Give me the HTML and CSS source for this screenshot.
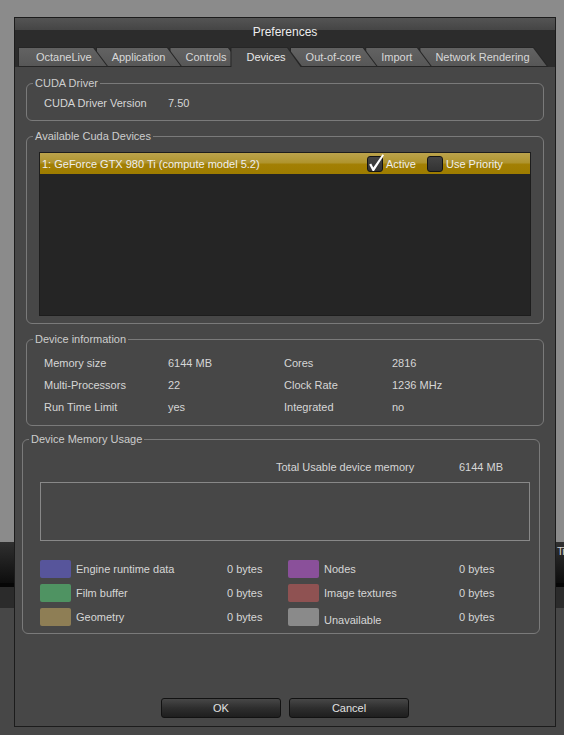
FILE: index.html
```html
<!DOCTYPE html>
<html lang="en">
<head>
  <meta charset="UTF-8">
  <meta name="viewport" content="width=device-width, initial-scale=1.0">
  <title>Preferences</title>
  <link rel="stylesheet" href="styles.css">
</head>
<body>

<!-- Application window behind the dialog -->
<div class="backdrop">
  <div class="bd-top"></div>
  <div class="bd-bar">Ti</div>
  <div class="bd-line"></div>
  <div class="bd-strip"></div>
  <div class="bd-rest"></div>
</div>

<!-- Preferences dialog -->
<div class="dialog">
  <div class="titlebar">Preferences</div>

  <!-- Tabs -->
  <div class="tabs">
    <span class="tab">OctaneLive</span>
    <span class="tab">Application</span>
    <span class="tab">Controls</span>
    <span class="tab active">Devices</span>
    <span class="tab">Out-of-core</span>
    <span class="tab">Import</span>
    <span class="tab">Network Rendering</span>
  </div>

  <div class="page">
    <!-- CUDA driver -->
    <fieldset class="group">
      <legend>CUDA Driver</legend>
      <div class="driver-row">
        <span class="driver-label">CUDA Driver Version</span>
        <span>7.50</span>
      </div>
    </fieldset>

    <!-- Device list -->
    <fieldset class="group">
      <legend>Available Cuda Devices</legend>
      <div class="devices-body">
        <div class="device-list">
          <div class="device-row">
            <span class="dev-name">1: GeForce GTX 980 Ti (compute model 5.2)</span>
            <span class="check-item">
              <span class="checkbox">
                <svg width="16" height="16" viewBox="0 0 16 16">
                  <path d="M2.2 8.6 L4.2 7.6 L6.3 11.4 L15.6 -1.8 L17 -0.8 L7 14.9 L5.6 14.9 Z" fill="#fff"/>
                </svg>
              </span>
              Active
            </span>
            <span class="check-item">
              <span class="checkbox"></span>
              Use Priority
            </span>
          </div>
        </div>
      </div>
    </fieldset>

    <!-- Device information -->
    <fieldset class="group">
      <legend>Device information</legend>
      <div class="info-grid">
        <span>Memory size</span><span>6144 MB</span>
        <span>Cores</span><span>2816</span>
        <span>Multi-Processors</span><span>22</span>
        <span>Clock Rate</span><span>1236 MHz</span>
        <span>Run Time Limit</span><span>yes</span>
        <span>Integrated</span><span>no</span>
      </div>
    </fieldset>

    <!-- Memory usage -->
    <fieldset class="group memory">
      <legend>Device Memory Usage</legend>
      <div class="memory-body">
        <div class="total-row">
          <span class="total-label">Total Usable device memory</span>
          <span>6144 MB</span>
        </div>
        <div class="usage-bar"></div>
        <div class="usage-legend">
          <span class="swatch engine"></span><span class="key">Engine runtime data</span><span>0 bytes</span>
          <span class="swatch nodes"></span><span class="key">Nodes</span><span>0 bytes</span>
          <span class="swatch film"></span><span class="key">Film buffer</span><span>0 bytes</span>
          <span class="swatch textures"></span><span class="key">Image textures</span><span>0 bytes</span>
          <span class="swatch geometry"></span><span class="key">Geometry</span><span>0 bytes</span>
          <span class="swatch unavailable"></span><span class="key low">Unavailable</span><span>0 bytes</span>
        </div>
      </div>
    </fieldset>

    <!-- Buttons -->
    <div class="buttons">
      <button type="button">OK</button>
      <button type="button">Cancel</button>
    </div>
  </div>
</div>

</body>
</html>
```

FILE: styles.css
```css
body {
  margin: 0;
  padding: 0;
  background-color: #8b8b8b;
  font-family: "Liberation Sans", Arial, sans-serif;
  font-size: 11px;
  overflow: hidden;
}

/* Window behind the dialog */
.backdrop {
  height: 735px;
  display: flex;
  flex-direction: column;
}

.bd-top {
  height: 542px;
  background-color: #8b8b8b;
}

.bd-bar {
  height: 41px;
  background: linear-gradient(#303030, #0d0d0d);
  color: #d0d0d0;
  line-height: 14px;
  padding-left: 557px;
  padding-top: 2px;
  box-sizing: border-box;
  letter-spacing: -1px;
  white-space: nowrap;
  overflow: hidden;
}

.bd-line {
  height: 4px;
  background-color: #060606;
}

.bd-strip {
  height: 21px;
  background-color: #2b2b2b;
}

.bd-rest {
  flex: 1;
  background-color: #474747;
}

/* Dialog */
.dialog {
  position: absolute;
  left: 14px;
  top: 17px;
  width: 542px;
  height: 710px;
  box-sizing: border-box;
  border: 1px solid #1c1c1c;
  background-color: #474747;
  display: flex;
  flex-direction: column;
  color: #d6d6d6;
}

.titlebar {
  height: 29px;
  line-height: 29px;
  text-align: center;
  font-size: 12px;
  color: #ececec;
  background: linear-gradient(#545454, #454545 12px, #2c2c2c 12px);
}

/* Tabs */
.tabs {
  display: flex;
  height: 20px;
  padding-left: 3px;
  background-color: #2c2c2c;
}

.tab {
  position: relative;
  height: 20px;
  line-height: 21px;
  padding: 0 17px 0 16px;
  margin-right: -13px;
  color: #d8d8d8;
  white-space: nowrap;
  background-color: #262626;
  clip-path: polygon(0 0, calc(100% - 15px) 0, 100% 100%, 0 100%);
}

.tab::before {
  content: "";
  position: absolute;
  top: 1px;
  left: 1px;
  right: 1px;
  bottom: 1px;
  background: linear-gradient(#626262, #575757);
  clip-path: polygon(0 0, calc(100% - 14.5px) 0, calc(100% - 1px) 100%, 0 100%);
  z-index: -1;
}

.tab:first-child { padding-left: 18px; }

.tab:nth-child(1) { z-index: 7; }
.tab:nth-child(2) { z-index: 6; }
.tab:nth-child(3) { z-index: 5; }
.tab:nth-child(4) { z-index: 4; }
.tab:nth-child(5) { z-index: 3; }
.tab:nth-child(6) { z-index: 2; padding-right: 20px; }
.tab:nth-child(7) { z-index: 1; padding-right: 19px; }

.tab.active {
  z-index: 10;
  color: #e8e8e8;
}

.tab.active::before {
  bottom: 0;
  background: #474747;
}

/* Page content */
.page {
  flex: 1;
  display: flex;
  flex-direction: column;
  padding: 9px 11px 0 11px;
}

.group {
  margin: 0;
  padding: 0;
  min-width: 0;
  border: 1px solid #7a7a7a;
  border-radius: 6px;
}

.group + .group {
  margin-top: 8px;
}

.group legend {
  margin-left: 6px;
  padding: 0 2px;
  line-height: 14px;
  color: #cdcdcd;
}

.driver-row {
  display: flex;
  line-height: 14px;
  padding: 6px 0 10px 17px;
}

.driver-label {
  width: 124px;
}

/* Device list */
.devices-body {
  padding: 9px 12px 7px 12px;
}

.device-list {
  height: 164px;
  box-sizing: border-box;
  border: 1px solid #1d1d1d;
  background-color: #252525;
}

.device-row {
  display: flex;
  align-items: center;
  height: 21px;
  padding-left: 2px;
  color: #efefef;
  background: linear-gradient(#bba34c, #b0952f 45%, #a27f03 55%, #9e7c00);
}

.dev-name {
  width: 325px;
}

.check-item {
  display: flex;
  align-items: center;
  gap: 3px;
}

.check-item + .check-item {
  margin-left: 11px;
}

.checkbox {
  display: block;
  width: 16px;
  height: 16px;
  box-sizing: border-box;
  border: 1px solid #141414;
  border-radius: 3px;
  background: linear-gradient(#444, #333);
}

.checkbox svg {
  display: block;
  margin: -1px;
  overflow: visible;
}

/* Device information */
.info-grid {
  display: grid;
  grid-template-columns: 124px 116px 108px 1fr;
  grid-auto-rows: 22px;
  align-items: center;
  padding: 6px 0 7px 17px;
}

/* Memory usage */
.group.memory {
  margin-top: 6px;
  margin-left: -4px;
  margin-right: 4px;
}

.memory-body {
  padding: 14px 9px 7px 17px;
}

.total-row {
  display: flex;
  line-height: 14px;
  padding-left: 236px;
}

.total-label {
  width: 183px;
}

.usage-bar {
  height: 59px;
  margin-top: 8px;
  box-sizing: border-box;
  border: 1px solid #888;
}

.usage-legend {
  display: grid;
  grid-template-columns: 31px 156px 61px 31px 140px 1fr;
  grid-auto-rows: 18px;
  row-gap: 6px;
  margin-top: 19px;
  line-height: 18px;
}

.usage-legend .key {
  padding-left: 5px;
}

.usage-legend .low {
  padding-top: 3px;
}

.swatch {
  border-radius: 2px;
}

.swatch.engine { background-color: #57559b; }
.swatch.film { background-color: #4f9362; }
.swatch.geometry { background-color: #8e7e55; }
.swatch.nodes { background-color: #8a509a; }
.swatch.textures { background-color: #8f5252; }
.swatch.unavailable { background-color: #8a8a8a; }

/* Buttons */
.buttons {
  margin-top: auto;
  display: flex;
  justify-content: center;
  gap: 8px;
  padding-bottom: 8px;
}

.buttons button {
  width: 120px;
  height: 20px;
  padding: 0;
  border: 1px solid #121212;
  border-radius: 3px;
  background: linear-gradient(#474747, #2e2e2e 50%, #1e1e1e);
  color: #e2e2e2;
  font-family: "Liberation Sans", Arial, sans-serif;
  font-size: 11px;
}
```
